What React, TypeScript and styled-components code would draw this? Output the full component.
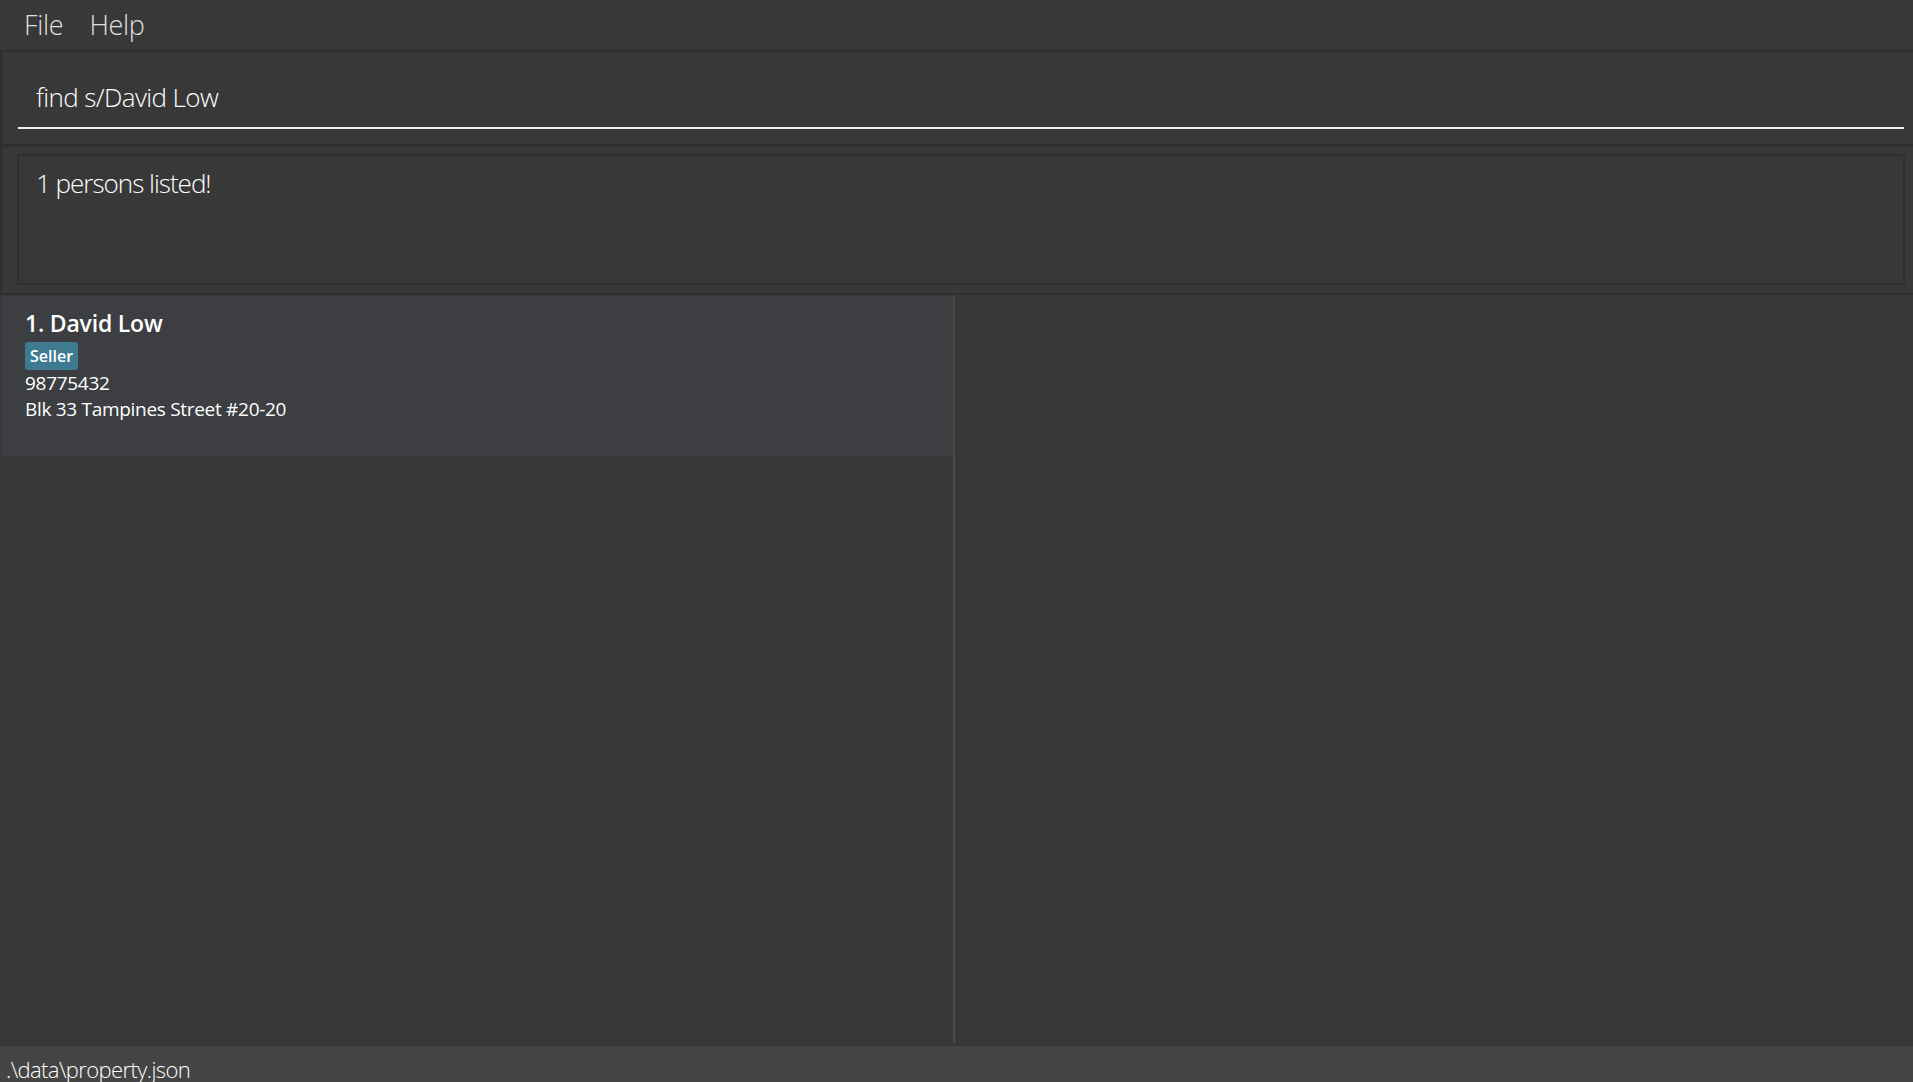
import React from "react";
import styled, { createGlobalStyle } from "styled-components";

const GlobalStyle = createGlobalStyle`
  html, body {
    margin: 0;
    padding: 0;
    height: 100%;
    background: #383838;
    overflow: hidden;
  }
  #root {
    height: 100%;
  }
`;

const Window = styled.div`
  display: flex;
  flex-direction: column;
  width: 1913px;
  height: 1082px;
  background: #383838;
  font-family: "Open Sans", "Noto Sans", sans-serif;
  color: #ffffff;
`;

const MenuBar = styled.div`
  display: flex;
  align-items: center;
  height: 50px;
  padding-left: 12px;
  border-bottom: 2px solid #2f2f2f;
  flex-shrink: 0;
`;

const MenuItem = styled.div`
  font-size: 27px;
  font-weight: 300;
  color: rgba(255, 255, 255, 0.85);
  letter-spacing: -0.3px;
  padding: 0 12px 2px 12px;
  margin-right: 2px;
`;

const CommandPane = styled.div`
  height: 92px;
  border-left: 2px solid #2f2f2f;
  border-bottom: 3px solid #2f2f2f;
  padding: 0 9px 0 16px;
  display: flex;
  align-items: flex-end;
  flex-shrink: 0;
`;

const CommandInput = styled.div`
  flex: 1;
  height: 62px;
  border-bottom: 2px solid #eeeeee;
  margin-bottom: 15px;
  padding-left: 18px;
  display: flex;
  align-items: center;
  font-size: 26px;
  font-weight: 300;
  letter-spacing: -0.6px;
  color: #ffffff;
  box-sizing: border-box;
`;

const ResultPane = styled.div`
  height: 148px;
  border-left: 2px solid #2f2f2f;
  border-bottom: 2px solid #2f2f2f;
  padding: 7px 8px 8px 15px;
  box-sizing: border-box;
  flex-shrink: 0;
  display: flex;
`;

const ResultBox = styled.div`
  flex: 1;
  border: 2px solid #2f2f2f;
  padding: 9px 17px;
  font-size: 26px;
  font-weight: 300;
  letter-spacing: -1px;
  color: #ffffff;
`;

const Split = styled.div`
  flex: 1;
  display: grid;
  grid-template-columns: 953px 2px 1fr;
  min-height: 0;
`;

const ListPane = styled.div`
  display: flex;
  flex-direction: column;
  padding: 1px 0 0 2px;
`;

const Divider = styled.div`
  background: #4b4b4b;
  margin-bottom: 3px;
`;

const DetailPane = styled.div`
  background: #383838;
`;

const Card = styled.div`
  background: #3c3e41;
  height: 160px;
  padding: 10px 0 0 23px;
  box-sizing: border-box;
  display: flex;
  flex-direction: column;
  align-items: flex-start;
`;

const Name = styled.div`
  font-size: 23px;
  font-weight: 600;
  color: #ffffff;
  line-height: 34px;
  letter-spacing: -0.2px;
`;

const Tags = styled.div`
  display: flex;
  gap: 6px;
  margin-top: 2px;
`;

const Tag = styled.span`
  background: #3e7b91;
  color: #ffffff;
  font-size: 16px;
  font-weight: 600;
  padding: 0 5px;
  height: 28px;
  line-height: 28px;
  border-radius: 3px;
`;

const Detail = styled.div`
  font-size: 19px;
  color: #ffffff;
  line-height: 26px;
  letter-spacing: -0.3px;
`;

const StatusBar = styled.div`
  height: 36px;
  background: #454545;
  padding-left: 6px;
  font-size: 22px;
  font-weight: 300;
  letter-spacing: -0.6px;
  color: #ffffff;
  line-height: 46px;
  overflow: hidden;
  flex-shrink: 0;
`;

export default function App() {
  return (
    <>
      <GlobalStyle />
      <Window>
        <MenuBar>
          <MenuItem>File</MenuItem>
          <MenuItem>Help</MenuItem>
        </MenuBar>
        <CommandPane>
          <CommandInput>find s/David Low</CommandInput>
        </CommandPane>
        <ResultPane>
          <ResultBox>1 persons listed!</ResultBox>
        </ResultPane>
        <Split>
          <ListPane>
            <Card>
              <Name>1. David Low</Name>
              <Tags>
                <Tag>Seller</Tag>
              </Tags>
              <Detail>98775432</Detail>
              <Detail>Blk 33 Tampines Street #20-20</Detail>
            </Card>
          </ListPane>
          <Divider />
          <DetailPane />
        </Split>
        <StatusBar>.\data\property.json</StatusBar>
      </Window>
    </>
  );
}
